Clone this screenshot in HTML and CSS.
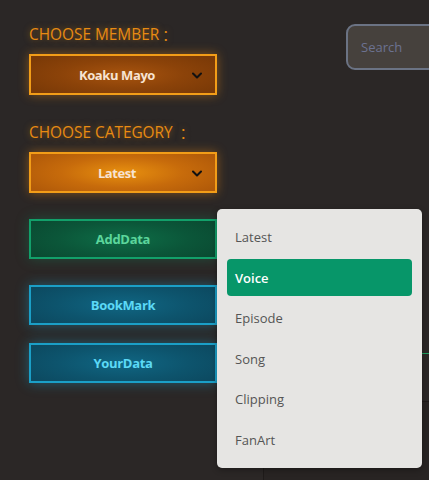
FILE: index.html
```html
<!DOCTYPE html>
<html lang="en">
<head>
<meta charset="utf-8">
<title>Choose</title>
<link rel="stylesheet" href="styles.css">
</head>
<body>
<div class="page">
  <aside class="sidebar">
    <div class="label">CHOOSE MEMBER<span class="colon">：</span></div>
    <div class="select select-member">
      <span class="select-text">Koaku Mayo</span>
      <svg class="chev" width="10" height="7" viewBox="0 0 10 7"><path d="M1 1.5 L5 5.5 L9 1.5" fill="none" stroke="#111" stroke-width="2" stroke-linecap="round" stroke-linejoin="round"/></svg>
    </div>
    <div class="label label-cat">CHOOSE CATEGORY <span class="colon">：</span></div>
    <div class="select select-cat">
      <span class="select-text">Latest</span>
      <svg class="chev" width="10" height="7" viewBox="0 0 10 7"><path d="M1 1.5 L5 5.5 L9 1.5" fill="none" stroke="#111" stroke-width="2" stroke-linecap="round" stroke-linejoin="round"/></svg>
    </div>
    <button class="btn btn-green">AddData</button>
    <button class="btn btn-blue btn-bookmark">BookMark</button>
    <button class="btn btn-blue btn-yours">YourData</button>
  </aside>
  <main class="content">
    <div class="search">Search</div>
    <div class="board">
      <div class="board-row"></div>
      <div class="board-line"></div>
      <div class="board-foot"></div>
    </div>
  </main>
  <ul class="menu">
    <li class="menu-item">Latest</li>
    <li class="menu-item active">Voice</li>
    <li class="menu-item">Episode</li>
    <li class="menu-item">Song</li>
    <li class="menu-item">Clipping</li>
    <li class="menu-item">FanArt</li>
  </ul>
</div>
</body>
</html>
```

FILE: styles.css
```css
* { box-sizing: border-box; }
html, body {
  margin: 0;
  padding: 0;
  width: 429px;
  height: 480px;
  overflow: hidden;
  background: #2b2726;
  font-family: "Open Sans", "Noto Sans", sans-serif;
}
.page {
  position: relative;
  display: flex;
  height: 480px;
}
.sidebar {
  width: 217px;
  padding: 24px 0 0 29px;
  display: flex;
  flex-direction: column;
  flex-shrink: 0;
}
.label {
  height: 20px;
  line-height: 20px;
  font-size: 15.4px;
  color: #e88b12;
  text-shadow: 0 0 6px rgba(232, 139, 18, 0.55);
  white-space: nowrap;
  margin-bottom: 10px;
}
.colon {
  font-family: "Noto Sans CJK SC", sans-serif;
  font-size: 14px;
  margin-left: 3px;
}
.label-cat { margin-top: 27px; }
.select {
  width: 188px;
  height: 41px;
  border: 2px solid #f29d18;
  display: flex;
  align-items: center;
  justify-content: center;
  position: relative;
  box-shadow: 0 0 10px rgba(242, 140, 20, 0.45);
}
.select-member {
  background: radial-gradient(ellipse 60% 70% at 50% 50%, #a8540e 0%, #8c4309 55%, #7b3a07 100%);
}
.select-cat {
  background: radial-gradient(ellipse 60% 75% at 50% 50%, #e8900f 0%, #c76b0b 55%, #b15a09 100%);
}
.select-text {
  color: #f7e3d2;
  font-weight: 700;
  font-size: 13px;
  letter-spacing: -0.4px;
  margin-left: -12px;
}
.chev {
  position: absolute;
  right: 13px;
  top: 16px;
}
.btn {
  width: 188px;
  height: 40px;
  font-family: inherit;
  font-weight: 700;
  font-size: 13px;
  letter-spacing: -0.3px;
  padding: 0;
  cursor: pointer;
}
.btn-green {
  margin-top: 26px;
  border: 2px solid #12a06a;
  color: #5cd69c;
  background: radial-gradient(ellipse 60% 75% at 50% 50%, #0e6d47 0%, #0b5639 60%, #0a4b32 100%);
  box-shadow: 0 0 12px rgba(14, 150, 100, 0.35);
}
.btn-blue {
  border: 2px solid #1b9fc7;
  color: #5cd9f6;
  background: radial-gradient(ellipse 60% 75% at 50% 50%, #106683 0%, #0d546d 60%, #0c4a61 100%);
  box-shadow: 0 0 12px rgba(26, 160, 205, 0.45);
}
.btn-bookmark { margin-top: 26px; }
.btn-yours { margin-top: 18px; }
.content {
  flex: 1;
  padding-top: 24px;
  min-width: 0;
}
.search {
  margin-left: 129px;
  width: 200px;
  height: 46px;
  border: 2px solid #6b7384;
  border-radius: 9px;
  background: #46413d;
  color: #6c7291;
  font-size: 13px;
  line-height: 42px;
  padding-left: 13px;
}
.board {
  margin-left: 46px;
  margin-top: 196px;
  position: relative;
}
.board-row {
  height: 28px;
}
.board-line {
  margin-top: 59px;
  height: 1px;
  background: #1ea060;
}
.board-foot {
  margin-top: 47px;
  height: 80px;
  border-top: 1px solid #1e1a19;
  border-left: 1px solid #1f1b1a;
  background: #282423;
}
.menu {
  position: absolute;
  left: 217px;
  top: 209px;
  width: 205px;
  margin: 0;
  padding: 6px 10px;
  list-style: none;
  background: #e6e5e3;
  border-radius: 5px;
  box-shadow: 0 2px 6px rgba(0, 0, 0, 0.3);
}
.menu-item {
  height: 37px;
  margin: 3.5px 0;
  padding-left: 8px;
  display: flex;
  align-items: center;
  font-size: 13px;
  color: #555;
  border-radius: 4px;
}
.menu-item.active {
  background: #079669;
  color: #fff;
  font-weight: 600;
}
```
